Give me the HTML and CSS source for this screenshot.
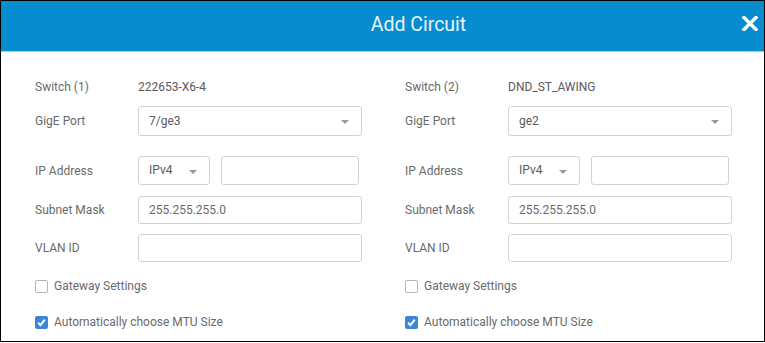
FILE: index.html
```html
<!DOCTYPE html>
<html lang="en">
<head>
    <meta charset="UTF-8">
    <meta name="viewport" content="width=device-width, initial-scale=1.0">
    <title>Add Circuit</title>
    <link rel="stylesheet" href="styles.css">
</head>
<body>
    <div class="modal">
        <!-- Cabeçalho do modal -->
        <div class="modal-header">
            <h1 class="modal-title">Add Circuit</h1>
            <svg class="close" width="16" height="15" viewBox="0 0 16 15">
                <path d="M2 1.5 L14 13.5 M14 1.5 L2 13.5" stroke="#fff" stroke-width="3.4" stroke-linecap="square" fill="none"/>
            </svg>
        </div>

        <div class="modal-body">
            <!-- Lado do switch 1 -->
            <div class="side">
                <div class="row row-info">
                    <span class="label">Switch (1)</span>
                    <span class="value">222653-X6-4</span>
                </div>
                <div class="row row-port">
                    <span class="label">GigE Port</span>
                    <div class="select select-wide">7/ge3</div>
                </div>
                <div class="row row-ip">
                    <span class="label">IP Address</span>
                    <div class="select select-small">IPv4</div>
                    <input type="text" class="field field-ip" value="">
                </div>
                <div class="row row-mask">
                    <span class="label">Subnet Mask</span>
                    <input type="text" class="field" value="255.255.255.0">
                </div>
                <div class="row row-vlan">
                    <span class="label">VLAN ID</span>
                    <input type="text" class="field" value="">
                </div>
                <div class="row row-check row-gw">
                    <span class="check"></span>
                    <span class="check-text">Gateway Settings</span>
                </div>
                <div class="row row-check row-mtu">
                    <span class="check checked">
                        <svg width="13" height="13" viewBox="0 0 13 13"><path d="M3.2 6.8 L5.4 9.2 L9.8 3.6" stroke="#fff" stroke-width="2" fill="none"/></svg>
                    </span>
                    <span class="check-text">Automatically choose MTU Size</span>
                </div>
            </div>

            <!-- Lado do switch 2 -->
            <div class="side">
                <div class="row row-info">
                    <span class="label">Switch (2)</span>
                    <span class="value">DND_ST_AWING</span>
                </div>
                <div class="row row-port">
                    <span class="label">GigE Port</span>
                    <div class="select select-wide">ge2</div>
                </div>
                <div class="row row-ip">
                    <span class="label">IP Address</span>
                    <div class="select select-small">IPv4</div>
                    <input type="text" class="field field-ip" value="">
                </div>
                <div class="row row-mask">
                    <span class="label">Subnet Mask</span>
                    <input type="text" class="field" value="255.255.255.0">
                </div>
                <div class="row row-vlan">
                    <span class="label">VLAN ID</span>
                    <input type="text" class="field" value="">
                </div>
                <div class="row row-check row-gw">
                    <span class="check"></span>
                    <span class="check-text">Gateway Settings</span>
                </div>
                <div class="row row-check row-mtu">
                    <span class="check checked">
                        <svg width="13" height="13" viewBox="0 0 13 13"><path d="M3.2 6.8 L5.4 9.2 L9.8 3.6" stroke="#fff" stroke-width="2" fill="none"/></svg>
                    </span>
                    <span class="check-text">Automatically choose MTU Size</span>
                </div>
            </div>
        </div>
    </div>
</body>
</html>
```

FILE: styles.css
```css
/* Página */
body {
    margin: 0;
    font-family: Roboto, "Liberation Sans", sans-serif;
    background-color: #fff;
}

/* Caixa do modal */
.modal {
    width: 765px;
    height: 342px;
    box-sizing: border-box;
    border: 1px solid #000;
    background-color: #fff;
}

/* Cabeçalho azul */
.modal-header {
    height: 50px;
    background-color: #078ccf;
    border-bottom: 1px solid #93d2f1;
    display: flex;
    align-items: center;
    padding-right: 6px;
}

.modal-title {
    flex: 1;
    margin: 0;
    margin-top: -3px;
    padding-left: 98px;
    text-align: center;
    font-size: 19.5px;
    font-weight: 400;
    color: #e6f3fb;
}

.close {
    display: block;
    margin-left: 4px;
    margin-top: -6px;
}

/* Corpo com duas colunas */
.modal-body {
    display: grid;
    grid-template-columns: 370px 370px;
    padding: 25px 0 0 34px;
}

.side {
    display: flex;
    flex-direction: column;
}

.row {
    display: flex;
    align-items: center;
    font-size: 12px;
    color: #6a6a6a;
}

.label {
    width: 103px;
    flex-shrink: 0;
}

.value {
    color: #5a5a5a;
}

.row-info { height: 20px; }
.row-port { margin-top: 9px; }
.row-ip { margin-top: 20px; }
.row-mask { margin-top: 11px; }
.row-vlan { margin-top: 10px; }
.row-gw { margin-top: 14px; height: 20px; }
.row-mtu { margin-top: 16px; height: 20px; }

/* Campos de seleção */
.select {
    position: relative;
    box-sizing: border-box;
    height: 30px;
    line-height: 28px;
    padding-left: 10px;
    border: 1px solid #d2d2d2;
    border-radius: 3px;
    color: #5a5a5a;
    font-size: 12px;
}

.select::after {
    content: "";
    position: absolute;
    right: 12px;
    top: 13px;
    border-left: 4px solid transparent;
    border-right: 4px solid transparent;
    border-top: 4px solid #999;
}

.select-wide { width: 224px; }

.select-small {
    width: 72px;
    height: 29px;
    line-height: 27px;
}

/* Campos de texto */
.field {
    box-sizing: border-box;
    width: 224px;
    height: 28px;
    padding: 0 10px;
    border: 1px solid #d2d2d2;
    border-radius: 3px;
    font-family: Roboto, "Liberation Sans", sans-serif;
    font-size: 12px;
    color: #6a6a6a;
    outline: none;
}

.field-ip {
    width: 138px;
    height: 29px;
    margin-left: 11px;
}

/* Caixas de seleção */
.check {
    box-sizing: border-box;
    width: 13px;
    height: 13px;
    border: 1px solid #b5b5b5;
    border-radius: 2px;
    background-color: #fff;
    margin-right: 6px;
    display: flex;
}

.check.checked {
    border: none;
    background-color: #3f85d6;
}

.check-text {
    color: #6a6a6a;
}
```
